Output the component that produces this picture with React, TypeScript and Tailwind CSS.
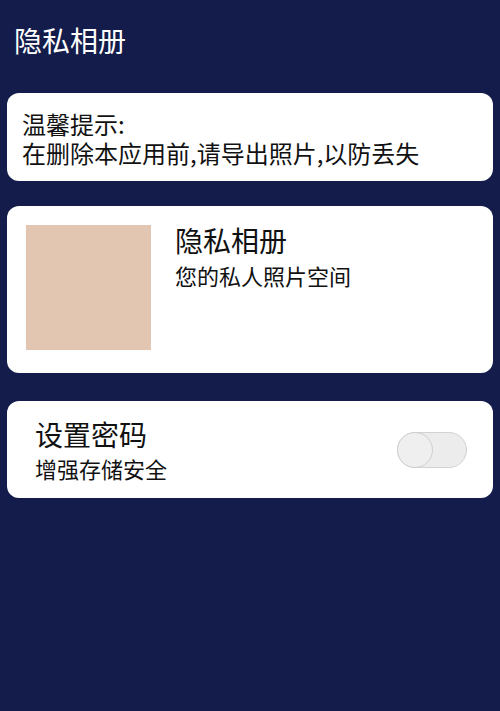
export default function App() {
  const font = { fontFamily: '"Noto Sans CJK SC", "Noto Sans", sans-serif' };
  return (
    <div className="w-[500px] h-[711px] bg-[#131c4a] flex flex-col" style={font}>
      <div className="h-[93px] pl-[14px] pt-[20px]">
        <div className="text-[28px] leading-[40px] text-white">隐私相册</div>
      </div>
      <div className="mx-[7px] h-[88px] bg-white rounded-[12px] pl-[15px] pt-[16px] text-[24px] leading-[29px] text-[#111]">
        <div>温馨提示:</div>
        <div>在删除本应用前,请导出照片,以防丢失</div>
      </div>
      <div className="mx-[7px] mt-[25px] bg-white rounded-[12px] p-[19px] pb-[23px] flex">
        <div className="w-[125px] h-[125px] bg-[#e2c6b1] shrink-0" />
        <div className="ml-[24px] flex flex-col">
          <div className="text-[28px] leading-[36px] mt-[-3px] text-[#111]">隐私相册</div>
          <div className="text-[22px] leading-[34px] text-[#111]">您的私人照片空间</div>
        </div>
      </div>
      <div className="mx-[7px] mt-[28px] h-[97px] bg-white rounded-[12px] pl-[28px] pr-[26px] flex items-center justify-between">
        <div className="flex flex-col">
          <div className="text-[28px] leading-[36px] text-[#111]">设置密码</div>
          <div className="text-[22px] leading-[32px] text-[#111]">增强存储安全</div>
        </div>
        <div className="relative w-[70px] h-[36px] rounded-full bg-[#ececec] border border-[#d2d2d2] mt-[1px]">
          <div className="absolute left-[-1px] top-[-1px] w-[36px] h-[36px] rounded-full bg-[#efefef] border border-[#cfcfcf]" />
        </div>
      </div>
    </div>
  );
}
